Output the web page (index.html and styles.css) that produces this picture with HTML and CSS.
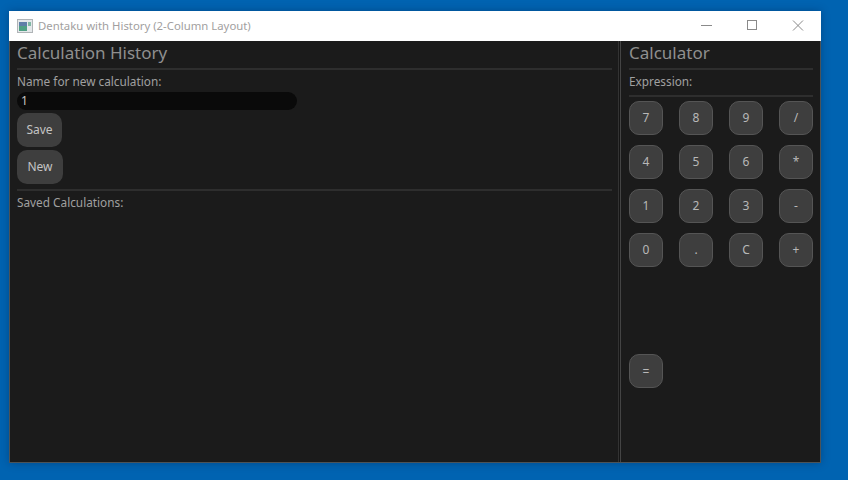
FILE: index.html
```html
<!DOCTYPE html>
<html lang="en">
<head>
<meta charset="utf-8">
<title>Dentaku with History (2-Column Layout)</title>
<link rel="stylesheet" href="styles.css">
</head>
<body>
<div class="window">
  <header class="titlebar">
    <svg class="app-icon" width="16" height="14" viewBox="0 0 16 14">
      <rect x="0.5" y="0.5" width="15" height="13" fill="#e4e8ea" stroke="#b0b4b7"/>
      <rect x="2" y="3" width="8" height="9" fill="#4fa084"/>
      <rect x="2" y="3" width="8" height="4" fill="#5f7fa8"/>
      <rect x="11" y="3" width="3" height="4" fill="#7fb8a4"/>
    </svg>
    <span class="title">Dentaku with History (2-Column Layout)</span>
    <div class="controls">
      <svg class="ctl" width="46" height="30" viewBox="0 0 46 30"><path d="M18 14.5h11" stroke="#8a8a8a" fill="none"/></svg>
      <svg class="ctl" width="46" height="30" viewBox="0 0 46 30"><rect x="18.5" y="9.5" width="9" height="9" stroke="#8a8a8a" fill="none"/></svg>
      <svg class="ctl" width="46" height="30" viewBox="0 0 46 30"><path d="M18 9.5l10 10M28 9.5l-10 10" stroke="#8a8a8a" fill="none"/></svg>
    </div>
  </header>
  <main class="content">
    <section class="history">
      <h1 class="heading">Calculation History</h1>
      <hr class="sep">
      <label class="label">Name for new calculation:</label>
      <div class="input">1</div>
      <button class="btn btn-save">Save</button>
      <button class="btn btn-new">New</button>
      <hr class="sep sep-saved">
      <div class="label label-saved">Saved Calculations:</div>
    </section>
    <div class="divider"></div>
    <section class="calc">
      <h1 class="heading">Calculator</h1>
      <hr class="sep">
      <div class="label">Expression:</div>
      <hr class="sep sep-expr">
      <div class="keys">
        <button class="key">7</button><button class="key">8</button><button class="key">9</button><button class="key">/</button>
        <button class="key">4</button><button class="key">5</button><button class="key">6</button><button class="key">*</button>
        <button class="key">1</button><button class="key">2</button><button class="key">3</button><button class="key">-</button>
        <button class="key">0</button><button class="key">.</button><button class="key">C</button><button class="key">+</button>
      </div>
      <button class="key key-eq">=</button>
    </section>
  </main>
</div>
</body>
</html>
```
FILE: styles.css
```css
* { box-sizing: border-box; }
html, body { height: 100%; }
body {
  margin: 0;
  padding: 11px 27px 17px 9px;
  background: #0063b1;
  font-family: "Noto Sans", "Open Sans", sans-serif;
  overflow: hidden;
}
.window {
  height: 452px;
  display: flex;
  flex-direction: column;
  box-shadow: 0 0 8px rgba(0, 30, 70, 0.35);
}
.titlebar {
  height: 30px;
  flex: none;
  background: #fff;
  display: flex;
  align-items: center;
  padding-left: 8px;
}
.app-icon { flex: none; margin-right: 5px; }
.title { font-size: 11.35px; color: #a29f9f; padding-bottom: 2px; }
.controls { margin-left: auto; display: flex; }
.ctl { display: block; }
.content {
  flex: 1;
  display: flex;
  background: #1b1b1b;
  border: 1px solid #4c5358;
  border-top: 0;
  color: #b4b4b4;
}
.history { width: 608px; flex: none; padding: 0 6px 0 7px; }
.divider {
  width: 3px;
  flex: none;
  background: #161616;
  border-left: 1px solid #333;
  border-right: 1px solid #444;
}
.calc { flex: 1; padding: 0 7px 0 8px; }
.heading {
  margin: 0;
  height: 27px;
  font-size: 17px;
  line-height: 24px;
  font-weight: 400;
  color: #8f8f8f;
}
.sep { margin: 0; border: 0; height: 2px; background: #2e2e2e; }
.label { display: block; font-size: 11.8px; line-height: 16px; margin-top: 3px; color: #a0a0a0; }
.input {
  width: 280px;
  height: 18px;
  margin-top: 3px;
  padding-left: 4px;
  border-radius: 9px;
  background: #0a0a0a;
  font-size: 12px;
  line-height: 18px;
  color: #c4c4c4;
}
.btn {
  display: block;
  height: 34px;
  border: 0;
  border-radius: 10px;
  background: #3e3e3e;
  color: #c4c4c4;
  font: 12px "Noto Sans", "Open Sans", sans-serif;
  padding: 0 0 2px;
}
.btn-save { width: 45px; margin-top: 3px; }
.btn-new { width: 46px; margin-top: 3px; }
.sep-saved { margin-top: 5px; }
.label-saved { margin-top: 3px; }
.sep-expr { margin-top: 6px; }
.keys {
  display: grid;
  grid-template-columns: repeat(4, 34px);
  justify-content: space-between;
  row-gap: 10px;
  margin-top: 4px;
}
.key {
  display: block;
  width: 34px;
  height: 34px;
  padding: 0 0 2px;
  border: 1px solid #555;
  border-radius: 10px;
  background: #3e3e3e;
  color: #b8b8b8;
  font: 12px "Noto Sans", "Open Sans", sans-serif;
}
.key-eq { margin-top: 87px; padding-bottom: 0; }
```
